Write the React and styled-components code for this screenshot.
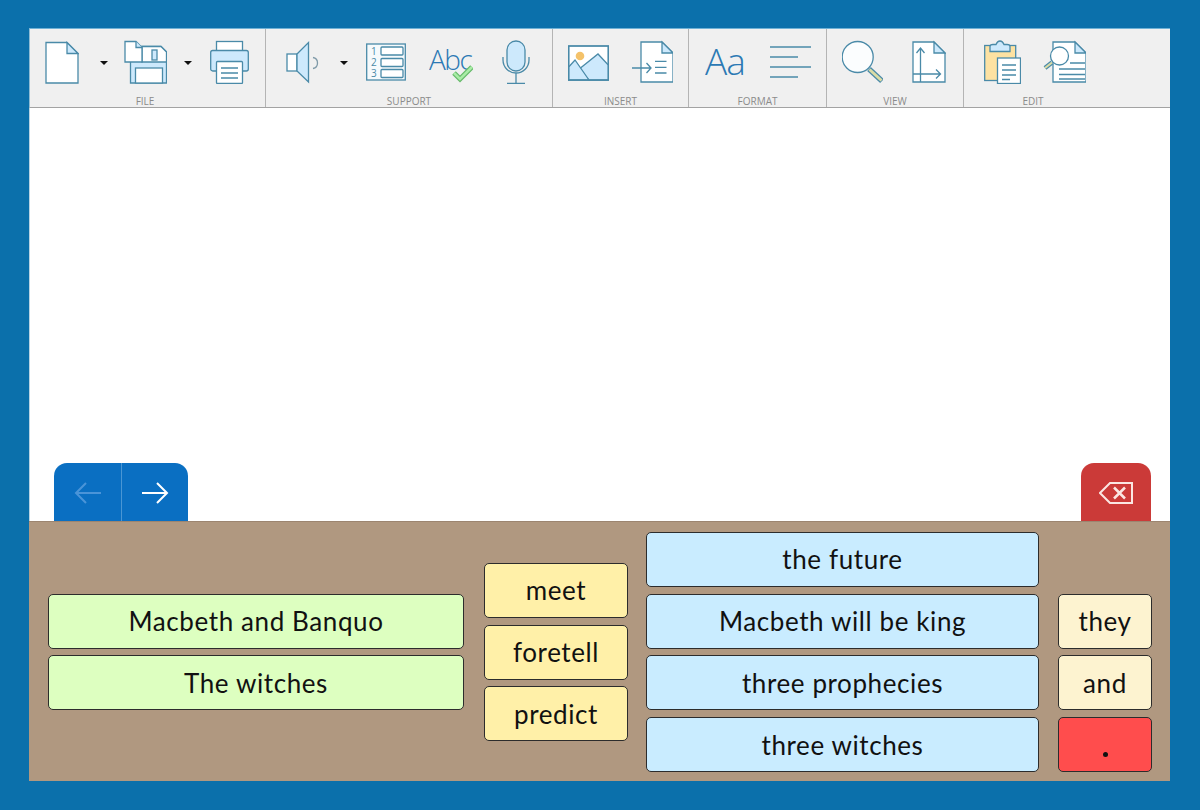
import React from "react";
import styled, { createGlobalStyle } from "styled-components";

const INK = "#4a8aa8";
const TINT = "#cde9fc";
const TYPE = "#2b79b4";

const Global = createGlobalStyle`
  html, body { margin: 0; padding: 0; background: #0b70ab; overflow: hidden; }
  #root { width: 1200px; height: 810px; padding: 28px 30px 29px 29px; box-sizing: border-box; }
`;

const Frame = styled.div`
  height: 100%;
  display: flex;
  flex-direction: column;
  background: #fff;
  box-shadow: inset 1px 0 0 #b9d3e2;
`;

const Toolbar = styled.div`
  flex: 0 0 80px;
  box-sizing: border-box;
  display: flex;
  background: #f0f0f0;
  border-top: 1px solid #6fb1d6;
  border-left: 1px solid #8fbcd4;
  border-bottom: 1px solid #a3a3a3;
`;

const Group = styled.section`
  width: ${(p) => p.$width}px;
  box-sizing: border-box;
  display: flex;
  flex-direction: column;
  border-right: ${(p) => (p.$last ? "none" : "1px solid #b4b4b4")};
`;

const Tools = styled.div`
  height: 44px;
  margin-top: 11px;
  display: flex;
  padding-left: ${(p) => p.$inset}px;
`;

const GroupLabel = styled.div`
  margin-top: 11px;
  padding-right: ${(p) => p.$nudge || 0}px;
  text-align: center;
  font: 400 10px/12px "Open Sans", sans-serif;
  color: #8b8b8b;
`;

const Glyph = styled.svg`
  flex: none;
  height: 44px;
  width: ${(p) => p.$w}px;
  margin-left: ${(p) => p.$gap || 0}px;
  fill: none;
  stroke: ${INK};
  stroke-width: 1.3;
`;

const Tool = ({ w, gap, children }) => (
  <Glyph $w={w} $gap={gap} viewBox={`0 0 ${w} 44`}>{children}</Glyph>
);

const Caret = styled.span`
  flex: none;
  align-self: flex-start;
  margin-top: 21px;
  margin-left: ${(p) => p.$gap}px;
  border-style: solid;
  border-width: 4px 4px 0 4px;
  border-color: #111 transparent transparent transparent;
`;

const Fold = ({ x, y, s = 11 }) => (
  <path d={`M${x} ${y}v${s}h${s}z`} fill={TINT} />
);

const Editor = styled.main`
  flex: 1;
  display: flex;
  align-items: flex-end;
  justify-content: space-between;
  padding: 0 19px 0 25px;
`;

const NavPair = styled.div`
  display: flex;
  height: 58px;
  border-radius: 13px 13px 0 0;
  overflow: hidden;
  background: #0a6fc2;
`;

const NavButton = styled.button`
  width: 67px;
  padding: 2px 0 0;
  border: none;
  background: none;
  display: flex;
  align-items: center;
  justify-content: center;
  color: ${(p) => (p.$dim ? "#4a94d8" : "#fff")};
  & + & { border-left: 1px solid #4a96d4; }
`;

const DeleteButton = styled.button`
  width: 70px;
  height: 58px;
  padding: 2px 0 0;
  border: none;
  border-radius: 13px 13px 0 0;
  background: #cb3a38;
  display: flex;
  align-items: center;
  justify-content: center;
`;

const WordPanel = styled.div`
  flex: 0 0 260px;
  box-sizing: border-box;
  padding: 1px 0 0 19px;
  display: flex;
  align-items: center;
  background: #b09880;
  border-top: 1px solid #9c8570;
`;

const Column = styled.div`
  width: ${(p) => p.$width}px;
  margin-left: ${(p) => p.$gap || 0}px;
  display: flex;
  flex-direction: column;
  gap: 6.7px;
`;

const TailColumn = styled(Column)`
  align-self: flex-end;
  margin-bottom: 9px;
`;

const Word = styled.button`
  height: 55px;
  padding: 0;
  box-sizing: border-box;
  background: ${(p) => p.$tone};
  border: 1px solid #2c2c2c;
  border-bottom-width: 1.5px;
  border-radius: 5px;
  font: 400 26px/1 Lato, sans-serif;
  letter-spacing: 0.6px;
  color: #111;
`;

const Stop = styled.i`
  display: block;
  width: 5px;
  height: 5px;
  margin: 20px auto 0;
  border-radius: 50%;
  background: #111;
`;

const columns = [
  { width: 416, gap: 0, tone: "#ddffc0", words: ["Macbeth and Banquo", "The witches"] },
  { width: 144, gap: 20, tone: "#fff0a8", words: ["meet", "foretell", "predict"] },
  { width: 393, gap: 18, tone: "#c9ecff", words: ["the future", "Macbeth will be king", "three prophecies", "three witches"] },
];

export default function App() {
  return (
    <>
      <Global />
      <Frame>
        <Toolbar>
          <Group $width={236}>
            <Tools $inset={15}>
              <Tool w={34}>
                <path d="M1 2.5h21l11 11V43H1z" fill="#fff" />
                <Fold x={22} y={2.5} />
              </Tool>
              <Caret $gap={21} />
              <Tool w={43} gap={16}>
                <path d="M6.5 6.5H37l5.5 5.5v31H6.5z" fill={TINT} />
                <path d="M18 6.5h19l5.5 5.5v10H18z" fill="#fff" />
                <rect x="28" y="10" width="5" height="10" fill={TINT} />
                <rect x="11.5" y="28" width="27" height="15" fill="#fff" />
                <path d="M1 1.5h11l6 6v14.500H1z" fill="#fff" />
                <path d="M12 1.5v6h6" fill={TINT} />
              </Tool>
              <Caret $gap={17} />
              <Tool w={39} gap={18}>
                <rect x="6.500" y="1.500" width="26" height="10" fill="#fff" />
                <rect x="0.700" y="10.500" width="37.600" height="20.500" rx="2" fill={TINT} />
                <rect x="6.500" y="21.500" width="26" height="22" rx="1" fill="#fff" />
                <path d="M11 28h17M11 33h17M11 38h17" />
              </Tool>
            </Tools>
            <GroupLabel $nudge={5}>FILE</GroupLabel>
          </Group>

          <Group $width={287}>
            <Tools $inset={20}>
              <Tool w={33}>
                <rect x="1" y="14" width="10" height="17" fill="#fff" />
                <path d="M11 14 22.500 2.500V42L11 31z" fill={TINT} />
                <path d="M27 17.500c6 1 6 10 0 11" stroke="#7f9aa8" />
              </Tool>
              <Caret $gap={21} />
              <Tool w={40} gap={18}>
                <rect x="0.700" y="4" width="38.600" height="36" fill="#f6fafc" />
                <rect x="15" y="7" width="22" height="8" rx="1" fill="#fff" />
                <rect x="15" y="18.500" width="22" height="8" rx="1" fill="#fff" />
                <rect x="15" y="29.500" width="22" height="8" rx="1" fill="#fff" />
                <text x="5" y="15" fontFamily="Open Sans" fontSize="10" fill={INK} stroke="none">1</text>
                <text x="5" y="26" fontFamily="Open Sans" fontSize="10" fill={INK} stroke="none">2</text>
                <text x="5" y="37" fontFamily="Open Sans" fontSize="10" fill={INK} stroke="none">3</text>
              </Tool>
              <Tool w={44} gap={23}>
                <text x="0" y="30" fontFamily="Open Sans" fontWeight="300" fontSize="28" letterSpacing="-1.500" fill={TYPE} stroke="none">Abc</text>
                <path d="M25 33l6 6 12-12" stroke="#66b96a" strokeWidth="5" />
                <path d="M25 33l6 6 12-12" stroke="#a9eca6" strokeWidth="2.500" />
              </Tool>
              <Tool w={28} gap={29}>
                <rect x="5" y="1" width="18" height="30" rx="9" fill={TINT} />
                <path d="M1 17v3a13 13 0 0 0 26 0v-3M14 33v10M5 43.300h18" />
              </Tool>
            </Tools>
            <GroupLabel>SUPPORT</GroupLabel>
          </Group>

          <Group $width={136}>
            <Tools $inset={15}>
              <Tool w={41}>
                <rect x="0.700" y="6" width="39.600" height="34" fill="#fff" />
                <circle cx="12" cy="16" r="4.300" fill="#f4c26a" stroke="none" />
                <path d="M10 30 30 14l10.300 11v15H21z" fill={TINT} />
                <path d="M0.700 27 7 20l14 20H0.700z" fill={TINT} />
                <rect x="0.700" y="6" width="39.600" height="34" />
              </Tool>
              <Tool w={41} gap={23}>
                <path d="M9 2h21l11 11v29H9z" fill="#fff" />
                <Fold x={30} y={2} />
                <path d="M0 28h19M14.500 23l4.500 5-4.500 5M23 21.300h11.500M23 27.300h11.500M23 33h11.500" stroke={INK} />
              </Tool>
            </Tools>
            <GroupLabel>INSERT</GroupLabel>
          </Group>

          <Group $width={138}>
            <Tools $inset={16}>
              <Tool w={44}>
                <text x="0" y="35" fontFamily="Open Sans" fontWeight="300" fontSize="37" letterSpacing="-1" fill={TYPE} stroke="none">Aa</text>
              </Tool>
              <Tool w={41} gap={21}>
                <path d="M0 7h41M0 17h28M0 27h41M0 37h28" />
              </Tool>
            </Tools>
            <GroupLabel>FORMAT</GroupLabel>
          </Group>

          <Group $width={137}>
            <Tools $inset={15}>
              <Tool w={41}>
                <path d="M27 29 40 41" stroke={INK} strokeWidth="5.500" />
                <path d="M27.500 29.500 39.500 40.500" stroke="#dadca6" strokeWidth="3" />
                <circle cx="15.700" cy="17" r="15.500" fill="#fbfdfe" />
              </Tool>
              <Tool w={34} gap={29}>
                <path d="M1 2h21l11 11v29H1z" fill="#fff" />
                <Fold x={22} y={2} />
                <path d="M8.500 42V8M4.500 13 8.500 8l4 5M1 34h27M24 29.500l4.500 4.500-4.500 4.500" />
              </Tool>
            </Tools>
            <GroupLabel>VIEW</GroupLabel>
          </Group>

          <Group $width={138} $last>
            <Tools $inset={20}>
              <Tool w={37}>
                <rect x="0.700" y="5.500" width="31" height="35" fill="#fde2a2" />
                <path d="M6 11.500V6.500C6 5 7 4.500 9 4.500h3C13 2 14.500 1 16 1s3 1 4 3.500h3c2 0 3 .5 3 2v5z" fill={TINT} />
                <rect x="13.500" y="18" width="23" height="25.500" fill="#fff" />
                <path d="M18 25h14M18 30h14M18 35h14M18 39.500h8" />
              </Tool>
              <Tool w={43} gap={22}>
                <path d="M10 2h22l11 11v29H10z" fill="#fff" />
                <Fold x={32} y={2} />
                <path d="M27 23h15M16 29h26M16 34.500h26M16 39h26" />
                <path d="M9 22.500 2 28" stroke={INK} strokeWidth="4.500" />
                <path d="M9 22.500 2 28" stroke="#dadca6" strokeWidth="2.200" />
                <circle cx="16.500" cy="16" r="9" fill="#fff" />
              </Tool>
            </Tools>
            <GroupLabel>EDIT</GroupLabel>
          </Group>
        </Toolbar>

        <Editor>
          <NavPair>
            <NavButton $dim aria-label="Back">
              <svg width="28" height="22" viewBox="0 0 28 22" fill="none" stroke="currentColor" strokeWidth="2">
                <path d="M27 11H2M12 1 2 11l10 10" />
              </svg>
            </NavButton>
            <NavButton aria-label="Forward">
              <svg width="28" height="22" viewBox="0 0 28 22" fill="none" stroke="currentColor" strokeWidth="2">
                <path d="M1 11h25M16 1l10 10-10 10" />
              </svg>
            </NavButton>
          </NavPair>
          <DeleteButton aria-label="Delete">
            <svg width="34" height="22" viewBox="0 0 34 22" fill="none" stroke="#fbe6e2" strokeWidth="2">
              <path d="M33 1H11L1 11l10 10h22z" />
              <path d="M15 5.500l11 11M26 5.500l-11 11" strokeWidth="2.500" />
            </svg>
          </DeleteButton>
        </Editor>

        <WordPanel>
          {columns.map((col) => (
            <Column key={col.width} $width={col.width} $gap={col.gap}>
              {col.words.map((w) => (
                <Word key={w} $tone={col.tone}>{w}</Word>
              ))}
            </Column>
          ))}
          <TailColumn $width={94} $gap={19}>
            <Word $tone="#fdf3d0">they</Word>
            <Word $tone="#fdf3d0">and</Word>
            <Word $tone="#ff4d4d"><Stop /></Word>
          </TailColumn>
        </WordPanel>
      </Frame>
    </>
  );
}
